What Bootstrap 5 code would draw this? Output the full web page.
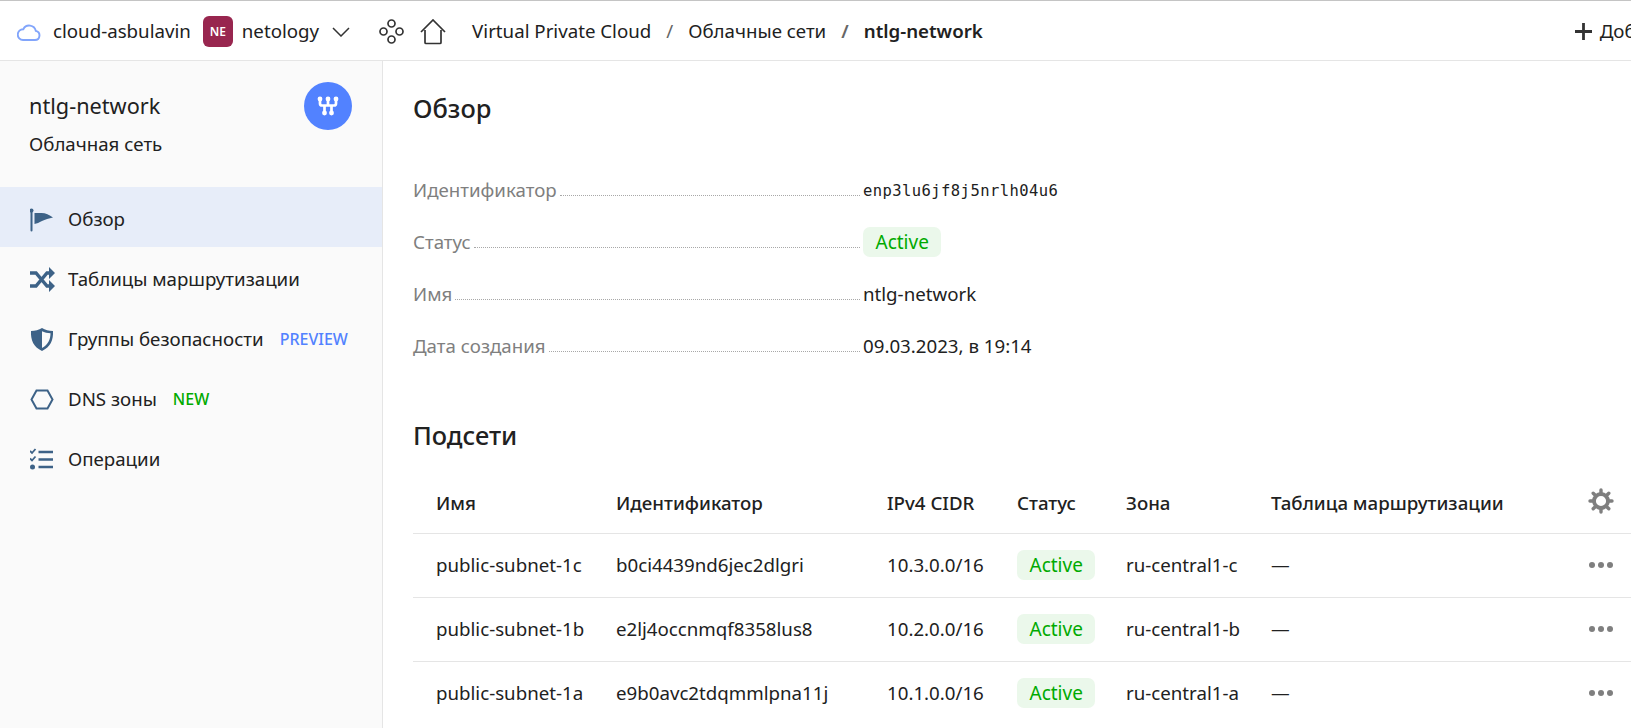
<!DOCTYPE html>
<html lang="ru">
<head>
    <meta charset="UTF-8">
    <meta name="viewport" content="width=device-width, initial-scale=1.0">
    <title>ntlg-network</title>
    <link href="https://cdn.jsdelivr.net/npm/bootstrap@5.3.0/dist/css/bootstrap.min.css" rel="stylesheet">
    <style>
        html, body { height: 100%; overflow: hidden; }
        body {
            font-family: "Noto Sans", sans-serif;
            font-size: 18.7px;
            color: #212121;
            background: #fff;
        }
        .top-bar {
            height: 61px;
            border-top: 1px solid #c4c4c4;
            border-bottom: 1px solid #e5e5e5;
            padding: 2px 0 0 17px;
            flex-wrap: nowrap;
            overflow: hidden;
        }
        .org-box {
            width: 30px;
            height: 31px;
            margin: 0 9px 0 12px;
            border-radius: 6px;
            background: #98264f;
            color: #fff;
            font-size: 12px;
            font-weight: 600;
        }
        .top-chevron { margin: 0 0 0 13px; }
        .top-nodes { margin-left: 29px; }
        .crumbs { margin: 0 0 0 26px; flex-wrap: nowrap; white-space: nowrap; }
        .crumbs .breadcrumb-item + .breadcrumb-item { padding-left: 15px; }
        .crumbs .breadcrumb-item + .breadcrumb-item::before { padding-right: 15px; color: #666; }
        .crumbs .breadcrumb-item.active { color: #212121; font-weight: 600; }
        .add-btn { white-space: nowrap; margin-right: -56px; }
        .page-wrap { height: 667px; }
        .side-bar { width: 383px; flex: none; background: #fafafa; border-right: 1px solid #e5e5e5; }
        .side-head { padding: 21px 30px 0 29px; height: 126px; }
        .side-title { font-size: 21.7px; line-height: 26px; margin-top: 11px; }
        .side-sub { margin-top: 13px; line-height: 24px; }
        .net-circle { width: 48px; height: 48px; border-radius: 50%; background: #5282ff; }
        .side-link {
            height: 60px;
            padding: 4px 0 0 30px;
            color: #212121;
            gap: 13px;
        }
        .side-link.is-on { background: #e7edf9; }
        .side-link svg { width: 25px; height: 25px; flex: none; }
        .tag-blue, .tag-green { font-size: 16px; font-weight: 500; margin-left: 3px; }
        .tag-blue { color: #5282ff; }
        .tag-green { color: #00aa00; }
        .main-pane { flex: 1; min-width: 0; padding-left: 30px; }
        .pane-title { font-size: 25.4px; font-weight: 500; line-height: 32px; margin: 0; }
        .overview-title { margin-top: 31px; }
        .info-list { margin: 40px 0 0; width: 650px; }
        .info-row { height: 52px; }
        .info-label { color: #7f7f7f; white-space: nowrap; }
        .info-dots { flex: 1; border-bottom: 1px dotted #a8a8a8; margin: 0 3px 0 3px; height: 1px; align-self: center; position: relative; top: 6px; }
        .info-val { width: 200px; flex: none; white-space: nowrap; }
        .mono-id { font-family: "DejaVu Sans Mono", monospace; font-size: 15.5px; letter-spacing: .43px; padding-top: 3px; }
        .state-pill {
            display: inline-block;
            background: #ebf8eb;
            color: #00aa00;
            border-radius: 7px;
            padding: 0 12.5px;
            font-size: 19px;
            line-height: 30px;
        }
        .subnets-title { margin-top: 47px; }
        .subnets {
            table-layout: fixed;
            width: 1218px;
            margin: 18px 0 0;
            --bs-table-border-color: #e5e5e5;
            --bs-table-color: #212121;
        }
        .subnets th, .subnets td { padding: 0 0 0 23px; vertical-align: middle; white-space: nowrap; border-bottom: 1px solid #e5e5e5; }
        .subnets th { height: 64px; font-weight: 500; padding-top: 4px; }
        .subnets td { height: 64px; }
        .subnets tbody tr:last-child td { border-bottom: 0; }
        .c-name { width: 180px; }
        .c-id { width: 271px; }
        .c-cidr { width: 130px; }
        .c-state { width: 109px; }
        .c-zone { width: 145px; }
        .c-route { width: 323px; }
        .c-act { width: 60px; }
        .subnets .c-act { padding: 0; }
        .dots-more { display: flex; justify-content: center; gap: 3px; }
        .dots-more i { width: 6px; height: 6px; border-radius: 50%; background: #7f7f7f; }
        .gear-wrap { display: flex; justify-content: center; }
    </style>
</head>
<body>

    <nav class="navbar top-bar d-flex align-items-center">
        <svg width="24" height="18" viewBox="0 0 24 18" class="me-2">
            <path d="M6 17h12a4.600 4.600 0 0 0 .8-9.100A6.700 6.700 0 0 0 6.300 6.200 5.400 5.400 0 0 0 6 17z" fill="none" stroke="#82a5fb" stroke-width="1.900"/>
        </svg>
        <span class="ms-1">cloud-asbulavin</span>
        <span class="org-box d-flex align-items-center justify-content-center">NE</span>
        <span>netology</span>
        <svg width="18" height="10" viewBox="0 0 18 10" class="top-chevron">
            <path d="M1 1l8 8 8-8" fill="none" stroke="#333" stroke-width="1.500"/>
        </svg>
        <svg width="25" height="25" viewBox="0 0 25 25" class="top-nodes">
            <g fill="none" stroke="#333" stroke-width="1.700">
                <circle cx="12.500" cy="4.500" r="3.500"/><circle cx="4.500" cy="12.500" r="3.500"/>
                <circle cx="20.500" cy="12.500" r="3.500"/><circle cx="12.500" cy="20.500" r="3.500"/>
            </g>
        </svg>
        <svg width="26" height="26" viewBox="0 0 26 26" class="ms-3">
            <path d="M1 13L13 1l12 12M5 11v12.500a1 1 0 0 0 1 1h14a1 1 0 0 0 1-1V11" fill="none" stroke="#333" stroke-width="1.700"/>
        </svg>
        <ol class="breadcrumb crumbs">
            <li class="breadcrumb-item">Virtual Private Cloud</li>
            <li class="breadcrumb-item">Облачные сети</li>
            <li class="breadcrumb-item active">ntlg-network</li>
        </ol>
        <div class="add-btn ms-auto d-flex align-items-center gap-2">
            <svg width="17" height="17" viewBox="0 0 17 17"><path d="M8.500 0v17M0 8.500h17" stroke="#333" stroke-width="2.800"/></svg>
            <span>Добавить</span>
        </div>
    </nav>

    <div class="page-wrap d-flex">
        <aside class="side-bar">
            <div class="side-head d-flex justify-content-between">
                <div>
                    <div class="side-title">ntlg-network</div>
                    <div class="side-sub">Облачная сеть</div>
                </div>
                <div class="net-circle d-flex align-items-center justify-content-center">
                    <svg width="22" height="20" viewBox="0 0 22 20">
                        <path d="M3 3v4.500a2 2 0 0 0 2 2h12a2 2 0 0 0 2-2V3M11 3v6.500M7.500 17V9.500M14.500 17V9.500" fill="none" stroke="#fff" stroke-width="2.700"/>
                        <g fill="#fff">
                            <circle cx="3" cy="3" r="2.400"/><circle cx="11" cy="3" r="2.400"/><circle cx="19" cy="3" r="2.400"/>
                            <circle cx="7.500" cy="17" r="2.400"/><circle cx="14.500" cy="17" r="2.400"/>
                        </g>
                    </svg>
                </div>
            </div>
            <nav class="nav flex-column">
                <a class="side-link is-on d-flex align-items-center text-decoration-none" href="#">
                    <svg viewBox="0 0 25 25"><path d="M1.500 3v20.500" stroke="#3d6287" stroke-width="2" stroke-linecap="round"/><circle cx="1.500" cy="3.500" r="2" fill="#3d6287"/><path d="M4.500 6h7c4 0 8 2 11.500 4.500-4 1-8 2-11 3.500-3 1.500-5 2.500-7.500 3z" fill="#3d6287"/></svg>
                    Обзор
                </a>
                <a class="side-link d-flex align-items-center text-decoration-none" href="#">
                    <svg viewBox="0 0 25 25"><g fill="none" stroke="#3d6287" stroke-width="3.400"><path d="M0 6h6l11 13h4M0 19h6l11-13h4"/></g><path d="M19 0l6 6-6 6zM19 13l6 6-6 6z" fill="#3d6287"/></svg>
                    Таблицы маршрутизации
                </a>
                <a class="side-link d-flex align-items-center text-decoration-none" href="#">
                    <svg viewBox="0 0 25 25"><path d="M12 1c3 2 7 3 11 3 .5 9-2.500 16-11 20C3.500 20 .5 13 1 4c4 0 8-1 11-3zm0 3.200V21c6-3.300 8.500-8.500 8.500-14.800-3 0-6-.8-8.500-2z" fill="#3d6287" fill-rule="evenodd"/></svg>
                    <span>Группы безопасности</span>
                    <span class="tag-blue">PREVIEW</span>
                </a>
                <a class="side-link d-flex align-items-center text-decoration-none" href="#">
                    <svg viewBox="0 0 25 25"><path d="M6.500 3.500h11l5 9-5 9h-11l-5-9z" fill="none" stroke="#3d6287" stroke-width="2"/></svg>
                    <span>DNS зоны</span>
                    <span class="tag-green">NEW</span>
                </a>
                <a class="side-link d-flex align-items-center text-decoration-none" href="#">
                    <svg viewBox="0 0 25 25"><g fill="none" stroke="#3d6287"><path d="M8.500 5h14.500M8.500 12.500h14.500M8.500 20h14.500" stroke-width="2.600"/><path d="M0 4l2 2 3.500-4M0 11.500l2 2 3.500-4" stroke-width="1.800"/></g><circle cx="2.500" cy="20" r="2.500" fill="#3d6287"/></svg>
                    Операции
                </a>
            </nav>
        </aside>

        <main class="main-pane">
            <h2 class="pane-title overview-title">Обзор</h2>
            <div class="info-list">
                <div class="info-row d-flex align-items-center">
                    <div class="d-flex flex-grow-1 align-items-center"><span class="info-label">Идентификатор</span><span class="info-dots"></span></div>
                    <div class="info-val mono-id">enp3lu6jf8j5nrlh04u6</div>
                </div>
                <div class="info-row d-flex align-items-center">
                    <div class="d-flex flex-grow-1 align-items-center"><span class="info-label">Статус</span><span class="info-dots"></span></div>
                    <div class="info-val"><span class="state-pill">Active</span></div>
                </div>
                <div class="info-row d-flex align-items-center">
                    <div class="d-flex flex-grow-1 align-items-center"><span class="info-label">Имя</span><span class="info-dots"></span></div>
                    <div class="info-val">ntlg-network</div>
                </div>
                <div class="info-row d-flex align-items-center">
                    <div class="d-flex flex-grow-1 align-items-center"><span class="info-label">Дата создания</span><span class="info-dots"></span></div>
                    <div class="info-val">09.03.2023, в 19:14</div>
                </div>
            </div>

            <h2 class="pane-title subnets-title">Подсети</h2>
            <table class="table subnets">
                <thead>
                    <tr>
                        <th class="c-name">Имя</th>
                        <th class="c-id">Идентификатор</th>
                        <th class="c-cidr">IPv4 CIDR</th>
                        <th class="c-state">Статус</th>
                        <th class="c-zone">Зона</th>
                        <th class="c-route">Таблица маршрутизации</th>
                        <th class="c-act">
                            <div class="gear-wrap">
                            <svg width="26" height="26" viewBox="0 0 26 26">
                                <path d="M13 2v4M13 20v4M2 13h4M20 13h4M5.200 5.200l2.800 2.800M18 18l2.800 2.800M5.200 20.800L8 18M18 8l2.800-2.800" stroke="#7f7f7f" stroke-width="3.400" stroke-linecap="round"/>
                                <circle cx="13" cy="13" r="7" fill="none" stroke="#7f7f7f" stroke-width="3.800"/>
                            </svg>
                            </div>
                        </th>
                    </tr>
                </thead>
                <tbody>
                    <tr>
                        <td>public-subnet-1c</td><td>b0ci4439nd6jec2dlgri</td><td>10.3.0.0/16</td>
                        <td><span class="state-pill">Active</span></td><td>ru-central1-c</td><td>—</td>
                        <td class="c-act"><span class="dots-more"><i></i><i></i><i></i></span></td>
                    </tr>
                    <tr>
                        <td>public-subnet-1b</td><td>e2lj4occnmqf8358lus8</td><td>10.2.0.0/16</td>
                        <td><span class="state-pill">Active</span></td><td>ru-central1-b</td><td>—</td>
                        <td class="c-act"><span class="dots-more"><i></i><i></i><i></i></span></td>
                    </tr>
                    <tr>
                        <td>public-subnet-1a</td><td>e9b0avc2tdqmmlpna11j</td><td>10.1.0.0/16</td>
                        <td><span class="state-pill">Active</span></td><td>ru-central1-a</td><td>—</td>
                        <td class="c-act"><span class="dots-more"><i></i><i></i><i></i></span></td>
                    </tr>
                </tbody>
            </table>
        </main>
    </div>

    <script src="https://cdn.jsdelivr.net/npm/bootstrap@5.3.0/dist/js/bootstrap.bundle.min.js"></script>
</body>
</html>
